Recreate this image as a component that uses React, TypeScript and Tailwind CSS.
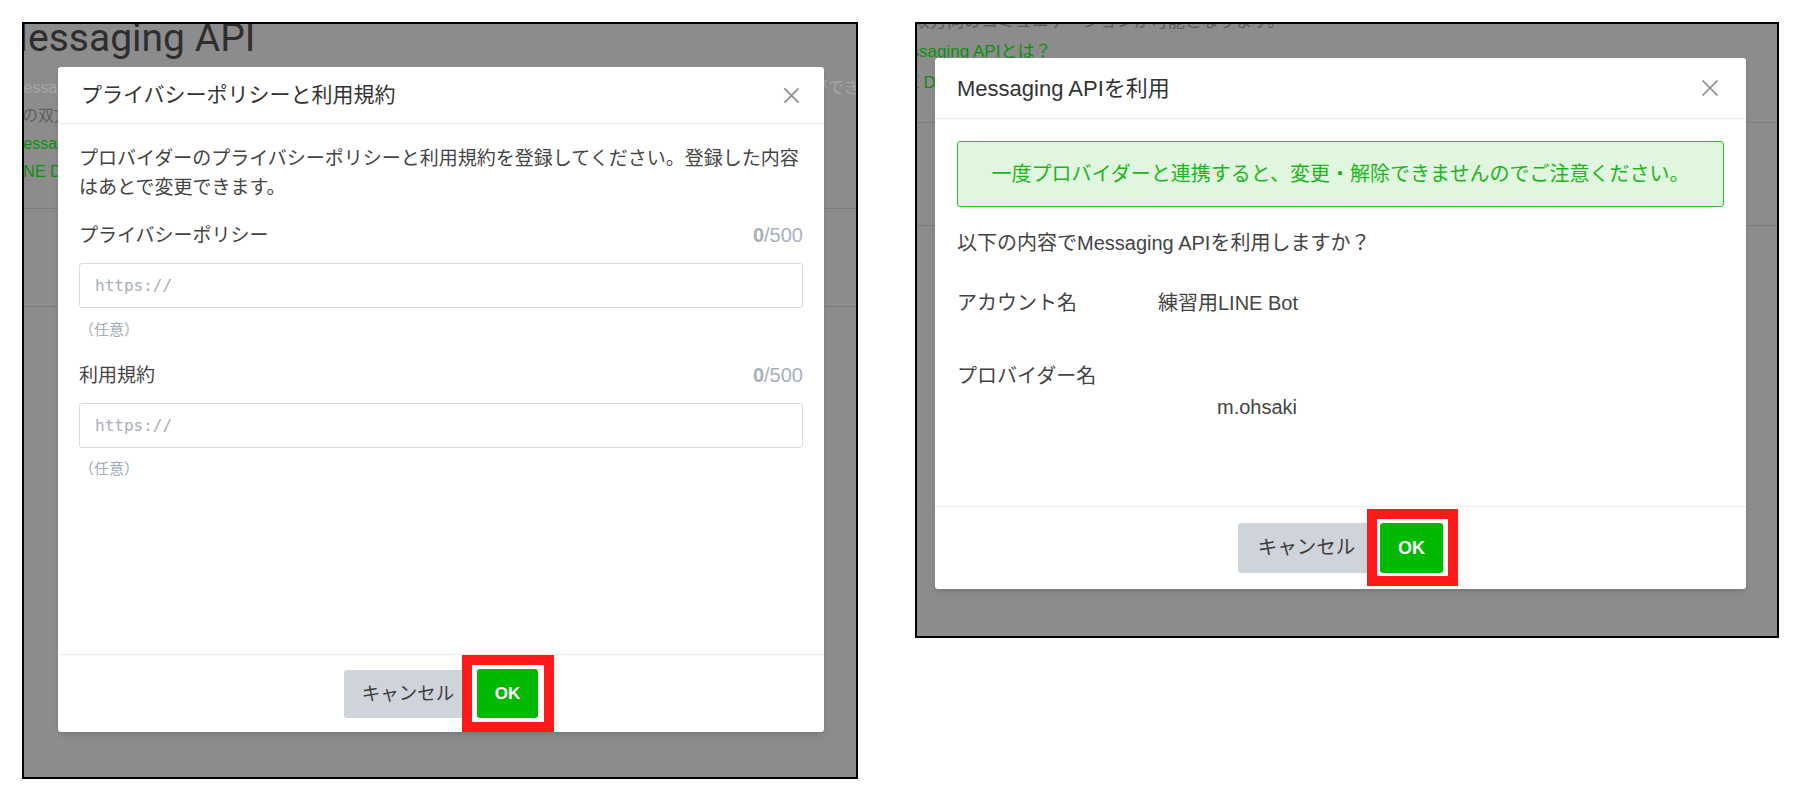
const jp = "font-['Liberation_Sans','Noto_Sans_CJK_JP',sans-serif]";

const CloseIcon = ({ size }: { size: number }) => (
	<svg width={size} height={size} viewBox="0 0 18 18" fill="none">
		<path d="M1.5 1.5L16.5 16.5M16.5 1.5L1.5 16.5" stroke="#8c8c8c" strokeWidth="1.7" />
	</svg>
);

const Optional = ({ className }: { className: string }) => (
	<p className={`${className} text-[15px] leading-[22px] text-[#a3abb6]`}>（任意）</p>
);

const UrlField = ({ label }: { label: string }) => (
	<div>
		<div className="flex items-center justify-between leading-[29px]">
			<span className="text-[19px] text-[#444]">{label}</span>
			<span className="text-[20px] text-[#a9b1bb]">
				<b>0</b>/500
			</span>
		</div>
		<input
			className="mt-[13px] h-[45px] w-full rounded-[3px] border border-[#d9dde3] px-[15px] font-['DejaVu_Sans_Mono',monospace] text-[16px] font-medium placeholder:text-[#a7aeb8] outline-none"
			placeholder="https://"
		/>
	</div>
);

const PolicyDialog = () => (
	<div className={`absolute left-[34px] top-[43px] flex h-[665px] w-[766px] flex-col rounded-[3px] bg-white shadow-md ${jp}`}>
		<div className="flex h-[57px] items-center justify-between border-b border-[#ececec] pl-[23px] pr-[24px]">
			<h2 className="text-[21px] text-[#333]">プライバシーポリシーと利用規約</h2>
			<CloseIcon size={17} />
		</div>
		<div className="flex-1 px-[21px] pt-[20px]">
			<p className="text-[19px] leading-[29px] text-[#444]">
				プロバイダーのプライバシーポリシーと利用規約を登録してください。登録した内容はあとで変更できます。
			</p>
			<div className="mt-[19px]">
				<UrlField label="プライバシーポリシー" />
				<Optional className="mt-[11px]" />
			</div>
			<div className="mt-[20px]">
				<UrlField label="利用規約" />
				<Optional className="mt-[10px]" />
			</div>
		</div>
		<div className="flex h-[78px] items-center justify-center gap-[5px] border-t border-[#ececec]">
			<button className="h-[48px] w-[128px] rounded-[3px] bg-[#cfd4db] text-[18.5px] text-[#3c3c3c]">
				キャンセル
			</button>
			<div className="relative">
				<button className="h-[49px] w-[61px] rounded-[3px] bg-[#00b900] text-[17px] font-bold text-white">
					OK
				</button>
				<div className="absolute bottom-[-14px] left-[-15px] right-[-16px] top-[-14px] border-[10px] border-[#ff1a1a]" />
			</div>
		</div>
	</div>
);

const ConfirmDialog = () => (
	<div className={`absolute left-[18px] top-[34px] flex h-[531px] w-[811px] flex-col rounded-[3px] bg-white shadow-md ${jp}`}>
		<div className="flex h-[61px] items-center justify-between border-b border-[#ececec] pl-[22px] pr-[27px]">
			<h2 className="text-[22px] text-[#333]">Messaging APIを利用</h2>
			<CloseIcon size={18} />
		</div>
		<div className="flex-1 px-[22px] pt-[22px] text-[20px] leading-[30px] text-[#444]">
			<div className="flex h-[66px] items-center justify-center rounded-[3px] border border-[#27c227] bg-[#e1f6df] text-[#1cb51c]">
				一度プロバイダーと連携すると、変更・解除できませんのでご注意ください。
			</div>
			<p className="mt-[21px]">以下の内容でMessaging APIを利用しますか？</p>
			<div className="mt-[30px] flex">
				<span className="w-[201px]">アカウント名</span>
				<span>練習用LINE Bot</span>
			</div>
			<div className="mt-[43px]">プロバイダー名</div>
			<div className="mt-[1px] pl-[260px]">m.ohsaki</div>
		</div>
		<div className="flex h-[83px] items-center justify-center gap-[5px] border-t border-[#ececec]">
			<button className="h-[50px] w-[137px] rounded-[3px] bg-[#cfd4db] text-[19.5px] text-[#3c3c3c]">
				キャンセル
			</button>
			<div className="relative">
				<button className="h-[50px] w-[63px] rounded-[3px] bg-[#00b900] text-[18px] font-bold text-white">
					OK
				</button>
				<div className="absolute bottom-[-13px] left-[-13px] right-[-15px] top-[-14px] border-[10px] border-[#ff1a1a]" />
			</div>
		</div>
	</div>
);

export default function App() {
	return (
		<div className="flex h-[800px] w-[1804px] items-start gap-[57px] bg-white pl-[22px] pt-[22px]">
			{/* left capture */}
			<div className="relative h-[757px] w-[836px] overflow-hidden border-2 border-black bg-[#8c8c8c]">
				<div className={`whitespace-nowrap text-[16px] ${jp}`}>
					<h1 className="ml-[-30px] mt-[-5px] font-['Roboto',sans-serif] text-[39px] leading-[39px] text-[#2e2e2e]">
						Messaging API
					</h1>
					<div className="mt-[16px] flex h-[28px] items-center justify-between text-[#a6a6a6]">
						<span className="ml-[-14px]">Messaging APIを利用すると</span>
						<span className="mr-[-4px]">することができ</span>
					</div>
					<div className="flex h-[28px] items-center text-[#5e5e5e]">
						<span className="ml-[-2px]">の双方向のコミュニケーション</span>
					</div>
					<div className="flex h-[28px] items-center text-[#0d8f0d]">
						<span className="ml-[-14px]">Messaging APIとは？</span>
					</div>
					<div className="flex h-[28px] items-center text-[#0d8f0d]">
						<span className="ml-[-14px]">LINE Developers</span>
					</div>
					<div className="mt-[22px] border-t border-[#7c7c7c]" />
					<div className="mt-[97px] border-t border-[#7c7c7c]" />
				</div>
				<PolicyDialog />
			</div>

			{/* right capture */}
			<div className="relative h-[616px] w-[864px] overflow-hidden border-2 border-black bg-[#8c8c8c]">
				<div className={`whitespace-nowrap text-[17px] ${jp}`}>
					<div className="mt-[-16px] flex h-[28px] items-center text-[#5e5e5e]">
						<span className="ml-[-4px]">双方向のコミュニケーションが可能となります。</span>
					</div>
					<div className="mt-[2px] flex h-[28px] items-center text-[#0d8f0d]">
						<span className="ml-[-30px]">Messaging APIとは？</span>
					</div>
					<div className="mt-[3px] flex h-[28px] items-center text-[#0d8f0d]">
						<span className="ml-[-36px]">LINE Developers</span>
					</div>
					<div className="mt-[25px] border-t border-[#7c7c7c]" />
					<div className="mt-[102px] border-t border-[#7c7c7c]" />
				</div>
				<ConfirmDialog />
			</div>
		</div>
	);
}
